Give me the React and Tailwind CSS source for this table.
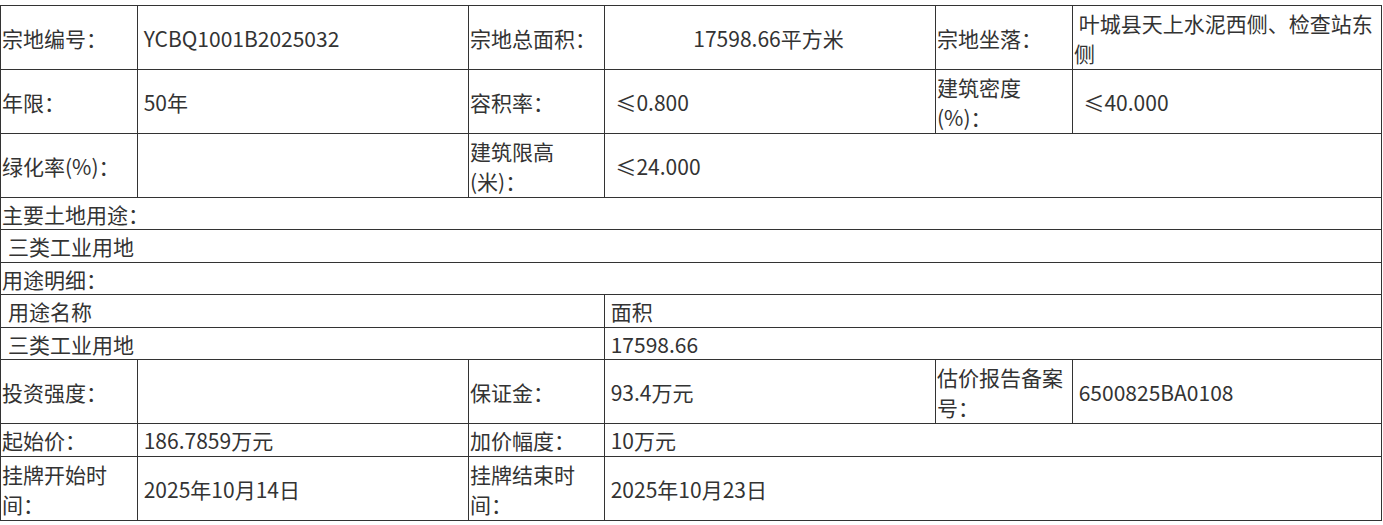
import clsx from "clsx";

const NB = "\u00a0";

function Label({ children, className }) {
  return (
    <div className={clsx("flex items-center bg-white pl-px pr-[4px]", className)}>
      <span>{children}</span>
    </div>
  );
}

function Value({ children, className, center, inset }) {
  return (
    <div
      className={clsx(
        "flex items-center bg-white pr-[4px]",
        inset ? "pl-[7px]" : "pl-px",
        center && "justify-center text-center",
        className
      )}
    >
      <span>{children}</span>
    </div>
  );
}

export default function App() {
  return (
    <div className="min-h-screen bg-white pt-[5px] font-['Noto_Sans_CJK_SC','Noto_Sans',sans-serif] text-[21px] leading-[30px] text-[#333]">
      <div className="grid w-fit grid-cols-[136px_330px_135px_330px_136px_308px] grid-rows-[63px_63px_63px_31px_32px_31px_32px_31px_63px_32px_63px] gap-px border border-[#333] bg-[#333]">
        {/* row 1 */}
        <Label>宗地编号：</Label>
        <Value>{NB}YCBQ1001B2025032</Value>
        <Label>宗地总面积：</Label>
        <Value center>17598.66平方米</Value>
        <Label>宗地坐落：</Label>
        <Value>{NB}叶城县天上水泥西侧、检查站东侧</Value>

        {/* row 2 */}
        <Label>年限：</Label>
        <Value>{NB}50年</Value>
        <Label>容积率：</Label>
        <Value>{NB}{NB}≤0.800</Value>
        <Label>建筑密度(%)：</Label>
        <Value>{NB}{NB}≤40.000</Value>

        {/* row 3 */}
        <Label>绿化率(%)：</Label>
        <Value></Value>
        <Label>建筑限高(米)：</Label>
        <Value className="col-span-3">{NB}{NB}≤24.000</Value>

        {/* land use */}
        <Label className="col-span-6">主要土地用途：</Label>
        <Value className="col-span-6" inset>三类工业用地</Value>
        <Label className="col-span-6">用途明细：</Label>
        <Value className="col-span-3" inset>用途名称</Value>
        <Value className="col-span-3">{NB}面积</Value>
        <Value className="col-span-3" inset>三类工业用地</Value>
        <Value className="col-span-3">{NB}17598.66</Value>

        {/* money */}
        <Label>投资强度：</Label>
        <Value></Value>
        <Label>保证金：</Label>
        <Value>{NB}93.4万元</Value>
        <Label>估价报告备案号：</Label>
        <Value>{NB}6500825BA0108</Value>

        <Label>起始价：</Label>
        <Value>{NB}186.7859万元</Value>
        <Label>加价幅度：</Label>
        <Value className="col-span-3">{NB}10万元</Value>

        <Label>挂牌开始时间：</Label>
        <Value>{NB}2025年10月14日</Value>
        <Label>挂牌结束时间：</Label>
        <Value className="col-span-3">{NB}2025年10月23日</Value>
      </div>
    </div>
  );
}
